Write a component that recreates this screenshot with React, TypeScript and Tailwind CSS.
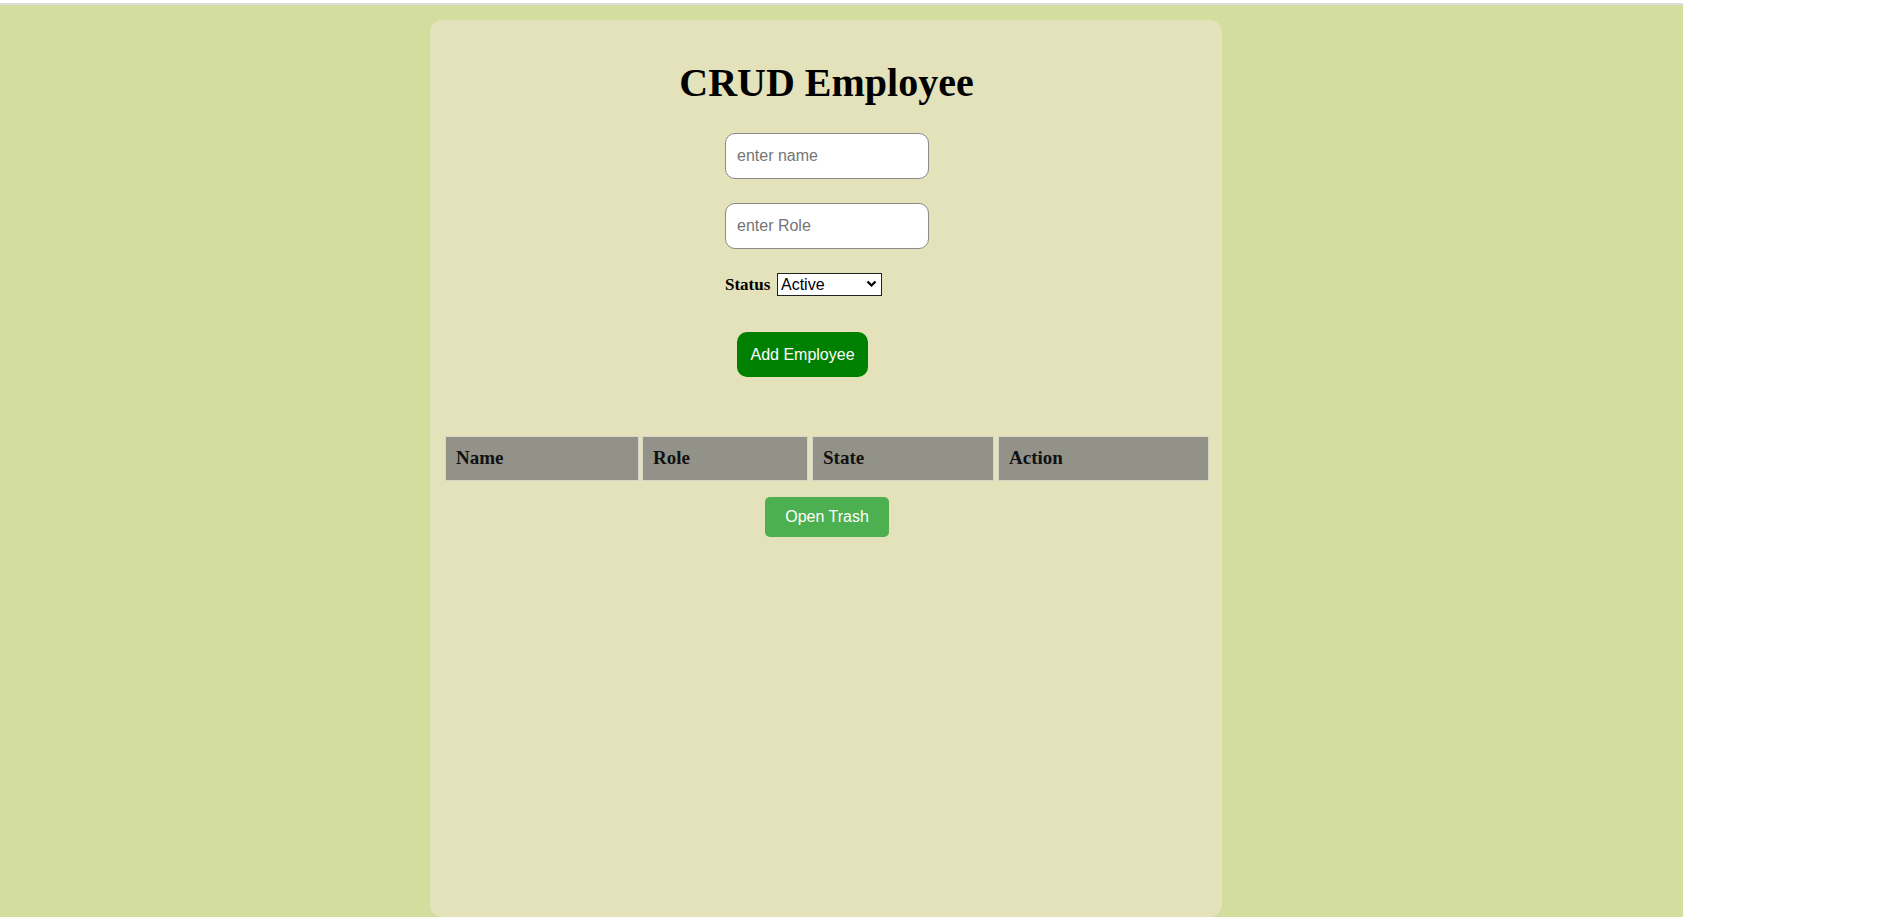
import React from "react";

export default function App() {
  const serif = { fontFamily: '"Liberation Serif", "Times New Roman", serif' };
  const sans = { fontFamily: '"Liberation Sans", Arial, sans-serif' };
  const cols = [
    { label: "Name", w: "w-[194px]" },
    { label: "Role", w: "w-[166px] ml-[3px]" },
    { label: "State", w: "w-[182px] ml-[4px]" },
    { label: "Action", w: "w-[211px] ml-[4px]" },
  ];
  return (
    <div className="w-[1892px] h-[917px] bg-white overflow-hidden pt-[3px]" style={serif}>
      <div className="w-[1683px] h-[914px] bg-[#d3dd9d] border-t-2 border-[#dedede] pt-[15px]">
        <div className="ml-[430px] w-[792px] h-[897px] bg-[#e4e2bb] rounded-[12px] pt-[40px] flex flex-col">
          <h1 className="text-[40px] leading-[46px] font-bold text-center text-black pl-[1px]">CRUD Employee</h1>
          <form className="w-[204px] ml-[295px] mt-[27px] flex flex-col" onSubmit={(e) => e.preventDefault()}>
            <input
              type="text"
              placeholder="enter name"
              className="h-[46px] w-[204px] rounded-[10px] border border-[#8a8a8a] bg-white px-[11px] text-[16px] text-black placeholder:text-[#757575] outline-none"
              style={sans}
            />
            <input
              type="text"
              placeholder="enter Role"
              className="mt-[24px] h-[46px] w-[204px] rounded-[10px] border border-[#8a8a8a] bg-white px-[11px] text-[16px] text-black placeholder:text-[#757575] outline-none"
              style={sans}
            />
            <div className="mt-[24px] h-[23px] flex items-center">
              <label className="w-[46px] text-[17px] font-bold text-black leading-[23px] whitespace-nowrap">Status</label>
              <div className="relative ml-[6px] w-[105px] h-[23px]">
                <select
                  className="appearance-none w-[105px] h-[23px] border border-[#222] bg-white pl-[3px] text-[16px] leading-[21px] text-black outline-none rounded-none"
                  style={sans}
                  defaultValue="Active"
                >
                  <option>Active</option>
                  <option>Inactive</option>
                </select>
                <svg
                  className="absolute right-[5px] top-[7px] pointer-events-none"
                  width="11"
                  height="8"
                  viewBox="0 0 11 8"
                >
                  <polyline points="1.5,1.5 5.5,5.5 9.5,1.5" fill="none" stroke="#000" strokeWidth="2.2" />
                </svg>
              </div>
            </div>
            <button
              type="submit"
              className="mt-[36px] ml-[12px] h-[45px] w-[131px] rounded-[10px] bg-[#008000] text-white text-[16px]"
              style={sans}
            >
              Add Employee
            </button>
          </form>
          <div className="mt-[59px] ml-[15px] flex">
            {cols.map((c) => (
              <div
                key={c.label}
                className={`${c.w} h-[45px] bg-[#929289] border border-[#d6d5ca] pl-[10px] flex items-center text-[19px] font-bold text-[#111]`}
              >
                {c.label}
              </div>
            ))}
          </div>
          <button
            type="button"
            className="mt-[16px] ml-[335px] h-[40px] w-[124px] rounded-[5px] bg-[#4caf50] text-white text-[16px]"
            style={sans}
          >
            Open Trash
          </button>
        </div>
      </div>
    </div>
  );
}
